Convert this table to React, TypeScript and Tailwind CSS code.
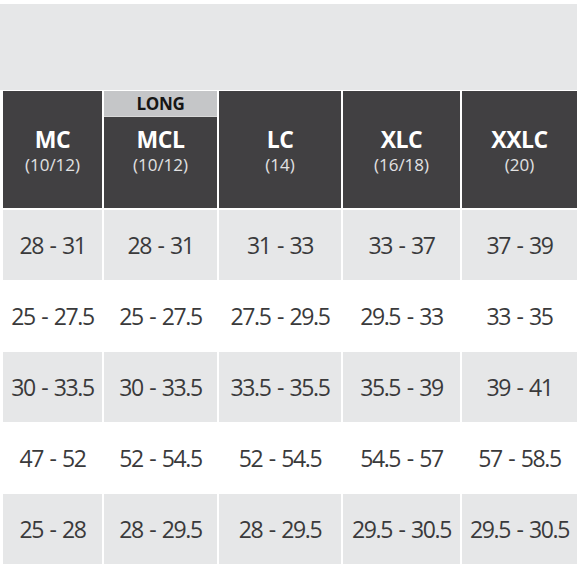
const columns = [
  { code: "MC", size: "(10/12)", width: "w-[99px]" },
  { code: "MCL", size: "(10/12)", width: "w-[113px]", long: true },
  { code: "LC", size: "(14)", width: "w-[122px]" },
  { code: "XLC", size: "(16/18)", width: "w-[117px]" },
  { code: "XXLC", size: "(20)", width: "w-[115px]" },
];

const rows = [
  ["28 - 31", "28 - 31", "31 - 33", "33 - 37", "37 - 39"],
  ["25 - 27.5", "25 - 27.5", "27.5 - 29.5", "29.5 - 33", "33 - 35"],
  ["30 - 33.5", "30 - 33.5", "33.5 - 35.5", "35.5 - 39", "39 - 41"],
  ["47 - 52", "52 - 54.5", "52 - 54.5", "54.5 - 57", "57 - 58.5"],
  ["25 - 28", "28 - 29.5", "28 - 29.5", "29.5 - 30.5", "29.5 - 30.5"],
];

export default function App() {
  return (
    <div
      className="w-[580px] h-[580px] bg-white pt-[4px] overflow-hidden"
      style={{ fontFamily: '"Open Sans", "Noto Sans", sans-serif' }}
    >
      <div className="w-[577px] h-[86px] bg-[#e6e7e8]" />

      {/* header */}
      <div className="flex gap-[2px] pl-[3px] mt-[1px]">
        {columns.map((col) => (
          <div
            key={col.code}
            className={`${col.width} relative h-[117px] bg-[#414042] flex flex-col items-center justify-center pt-[7px]`}
          >
            {col.long && (
              <div className="absolute top-0 left-0 right-0 h-[26px] bg-[#c5c6c8] border-b border-[#d8d8d8] flex items-center justify-center text-[17px] font-bold text-[#161616] leading-none tracking-[-0.3px]">
                LONG
              </div>
            )}
            <div className="text-[23px] leading-[24px] font-bold text-white tracking-[-0.5px]">
              {col.code}
            </div>
            <div className="text-[17px] leading-[28px] text-[#e2e2e2]">
              {col.size}
            </div>
          </div>
        ))}
      </div>

      {/* body */}
      <div className="flex flex-col gap-[1px] mt-[2px]">
        {rows.map((row, i) => (
          <div key={i} className="flex gap-[2px] pl-[3px]">
            {row.map((val, j) => (
              <div
                key={j}
                className={`${columns[j].width} h-[70px] flex items-center justify-center text-[23px] text-[#3a3a3b] tracking-[-1.4px] [word-spacing:2px] whitespace-nowrap ${
                  i % 2 === 0 ? "bg-[#e6e7e8]" : "bg-white"
                }`}
              >
                {val}
              </div>
            ))}
          </div>
        ))}
      </div>
    </div>
  );
}
